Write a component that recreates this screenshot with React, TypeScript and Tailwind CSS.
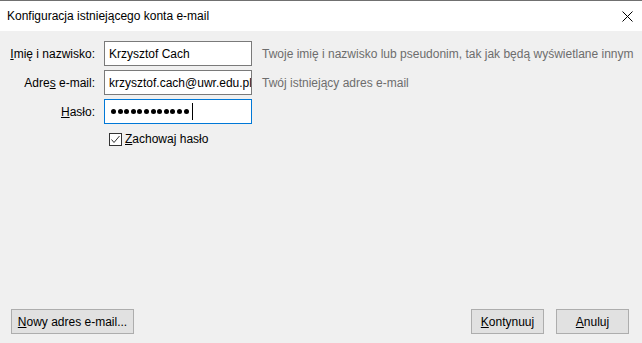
export default function App() {
  const dots = Array.from({ length: 12 });

  return (
    <div className="flex h-[343px] w-[642px] flex-col overflow-hidden bg-[#f0f0f0] font-['Liberation_Sans',Arial,sans-serif] text-[12px] text-black">
      {/* title bar */}
      <div className="flex h-[31px] items-center justify-between border-t border-[#707070] bg-white pl-[7px] pr-[8px]">
        <span>Konfiguracja istniejącego konta e-mail</span>
        <svg width="11" height="11" viewBox="0 0 11 11" className="mr-[1px]">
          <path d="M0.5 0.5 L10.5 10.5 M10.5 0.5 L0.5 10.5" stroke="#000" strokeWidth="1" fill="none" />
        </svg>
      </div>

      {/* form */}
      <div className="flex flex-1 flex-col gap-[4px] pt-[10px]">
        <div className="flex h-[25px] items-center">
          <label className="w-[95px] text-right"><u>I</u>mię i nazwisko:</label>
          <div className="ml-[9px] flex h-[25px] w-[148px] items-center border border-[#7a7a7a] bg-white pl-[4px]">Krzysztof Cach</div>
          <span className="ml-[10px] whitespace-nowrap text-[#6d6d6d]">Twoje imię i nazwisko lub pseudonim, tak jak będą wyświetlane innym</span>
        </div>

        <div className="flex h-[25px] items-center">
          <label className="w-[95px] text-right">Adre<u>s</u> e-mail:</label>
          <div className="ml-[9px] flex h-[25px] w-[148px] items-center overflow-hidden whitespace-nowrap border border-[#7a7a7a] bg-white pl-[4px]">krzysztof.cach@uwr.edu.pl</div>
          <span className="ml-[10px] whitespace-nowrap text-[#6d6d6d]">Twój istniejący adres e-mail</span>
        </div>

        <div className="flex h-[25px] items-center">
          <label className="w-[95px] text-right"><u>H</u>asło:</label>
          <div className="ml-[9px] flex h-[25px] w-[148px] items-center border border-[#0078d7] bg-white pl-[6px]">
            <div className="flex items-center gap-[1.6px]">
              {dots.map((_, i) => (
                <span key={i} className="h-[5px] w-[5px] rounded-full bg-black" />
              ))}
            </div>
            <span className="ml-[3px] h-[17px] w-[1px] bg-black" />
          </div>
        </div>

        <div className="mt-[2px] flex items-center pl-[109px]">
          <span className="flex h-[13px] w-[13px] items-center justify-center border border-[#333] bg-white">
            <svg width="11" height="11" viewBox="0 0 11 11">
              <path d="M1.5 5.5 L4 8.5 L9.5 2" stroke="#333" strokeWidth="1" fill="none" />
            </svg>
          </span>
          <span className="ml-[3px]"><u>Z</u>achowaj hasło</span>
        </div>
      </div>

      {/* buttons */}
      <div className="flex items-center justify-between pb-[9px] pl-[11px] pr-[13px]">
        <button className="h-[25px] w-[123px] border border-[#adadad] bg-[#e1e1e1]">
          <u>N</u>owy adres e-mail...
        </button>
        <div className="flex gap-[12px]">
          <button className="h-[25px] w-[73px] border border-[#adadad] bg-[#e1e1e1]"><u>K</u>ontynuuj</button>
          <button className="h-[25px] w-[73px] border border-[#adadad] bg-[#e1e1e1]"><u>A</u>nuluj</button>
        </div>
      </div>
    </div>
  );
}
